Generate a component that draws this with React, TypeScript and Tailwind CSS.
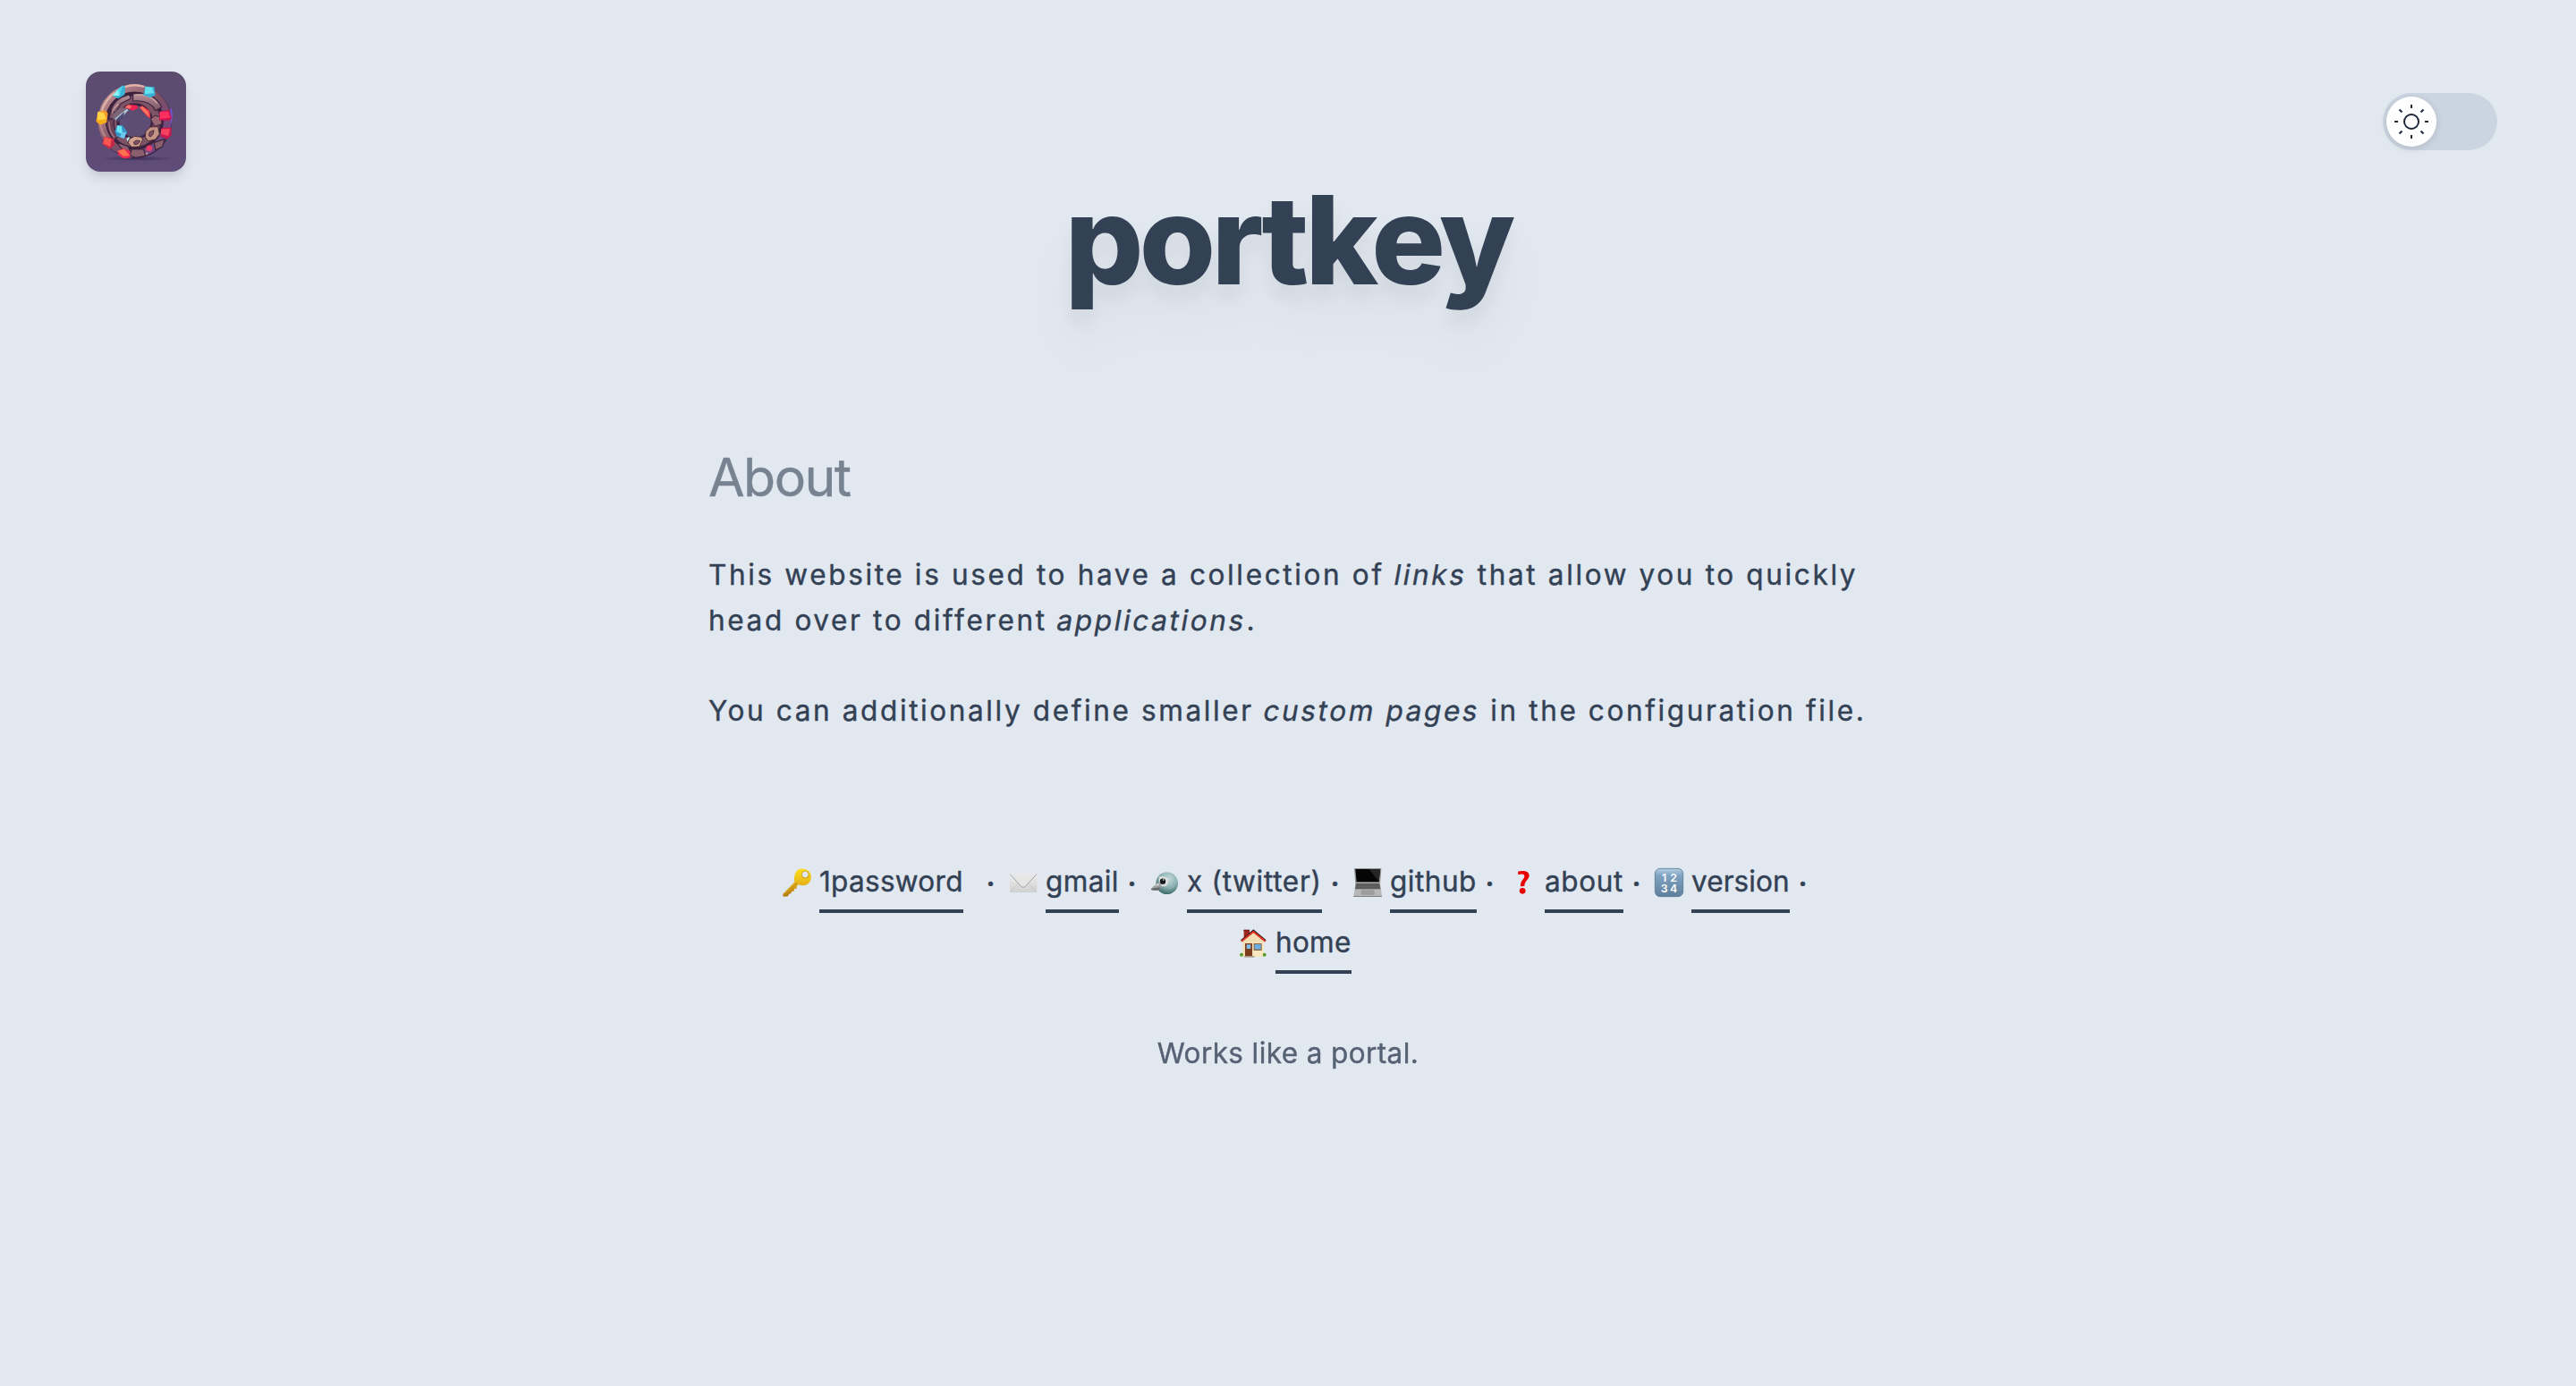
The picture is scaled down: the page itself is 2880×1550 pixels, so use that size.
import React from "react";

type IconProps = { children: React.ReactNode; box: string };

function Emoji({ children, box }: IconProps) {
  return (
    <svg viewBox={box} className="mr-[9px] mt-[5px] h-8 w-8 shrink-0 overflow-visible" aria-hidden="true">
      {children}
    </svg>
  );
}

function KeyIcon() {
  return (
    <Emoji box="45 63 96 96">
      <defs>
        <linearGradient id="key" x1="0" y1="0" x2="0" y2="1">
          <stop offset="0" stopColor="#ffdf1b" />
          <stop offset="0.55" stopColor="#e6b31a" />
          <stop offset="1" stopColor="#a9700c" />
        </linearGradient>
      </defs>
      <path
        fillRule="evenodd"
        fill="url(#key)"
        d="M99 67c12-5 27-1 36 9 8 10 8 24 0 34-7 9-18 12-28 10l-9-2-5 4-1 9-8 1-1 8-8 1-2 7-7 1-3 8-16 1-1-9 39-40c-3-15 1-36 14-42zM120 73a11 11 0 1 0 .1 0z"
      />
      <path d="M48 151l42-41 6 5-45 43z" fill="#c58f12" opacity=".6" />
      <path d="M50 148l38-38" stroke="#e7b82b" strokeWidth="3" />
      <circle cx="121" cy="84" r="12" fill="none" stroke="#b88a13" strokeWidth="2" />
    </Emoji>
  );
}

function MailIcon() {
  return (
    <Emoji box="804 63 96 96">
      <defs>
        <linearGradient id="mail" x1="0" y1="0" x2="0" y2="1">
          <stop offset="0" stopColor="#efefef" />
          <stop offset="1" stopColor="#d0d0d0" />
        </linearGradient>
      </defs>
      <rect x="807" y="81" width="91" height="63" rx="2" fill="url(#mail)" />
      <path d="M808 142l32-31M897 142l-32-31" stroke="#bdbdbd" strokeWidth="2" />
      <path d="M808 83l37 41q7 7 14 0l38-41" fill="#e6e6e6" stroke="#a4a4a4" strokeWidth="3" />
    </Emoji>
  );
}

function BirdIcon() {
  return (
    <Emoji box="48 63 96 96">
      <defs>
        <radialGradient id="bird" cx=".58" cy=".3" r=".7">
          <stop offset="0" stopColor="#c3d9dc" />
          <stop offset=".55" stopColor="#8fb4b5" />
          <stop offset="1" stopColor="#3f6c6c" />
        </radialGradient>
      </defs>
      <circle cx="104" cy="113" r="37" fill="url(#bird)" />
      <path d="M77 92c11-4 30-1 32 13 1 12-8 20-17 19-9 0-17-12-15-32z" fill="#e4e4e0" opacity=".85" />
      <path d="M51 132c7-9 17-19 27-22 8 7 8 18 2 25-9 3-21 3-29 1z" fill="#9c9fa0" />
      <path d="M51 132c10-2 20-3 30-6l-1 9c-10 3-21 2-29 0z" fill="#62676a" />
      <path d="M60 124c5-5 10-9 17-11l1 6z" fill="#cfd1d1" />
      <circle cx="90" cy="107" r="9.5" fill="#171a1b" />
      <circle cx="92" cy="102" r="2.5" fill="#fff" />
    </Emoji>
  );
}

function LaptopIcon() {
  return (
    <Emoji box="729 63 96 96">
      <path d="M734 63h87q2 0 2 3l-4 48h-83l-4-48q0-3 2-3z" fill="#8f8f8f" />
      <path d="M736 66h83l-4 43h-75z" fill="#050505" />
      <path d="M782 66h37l-4 42z" fill="#252525" />
      <path d="M737 112h82l6 44q0 3-3 3h-89q-4 0-3-3z" fill="#b7b7b7" />
      <path d="M738 114h79l3 19h-85z" fill="#565656" />
      <path d="M737 119h81M736 124h83M735 129h85" stroke="#8b8b8b" strokeWidth="1.2" strokeDasharray="4 1.5" />
      <path d="M756 136h43l2 16h-47z" fill="#9d9d9d" />
      <path d="M730 156h95v3h-95z" fill="#808080" />
    </Emoji>
  );
}

function QuestionIcon() {
  return (
    <Emoji box="108 63 96 96">
      <path
        d="M141 74c15-4 38-3 38 13 0 15-16 17-16 36l-13 1c-1-22 13-24 13-34 0-8-9-9-21-5z"
        fill="#e80000"
      />
      <circle cx="156.500" cy="139" r="10" fill="#e80000" />
    </Emoji>
  );
}

function NumbersIcon() {
  return (
    <Emoji box="600 63 96 96">
      <defs>
        <linearGradient id="nums" x1="0" y1="0" x2="0" y2="1">
          <stop offset="0" stopColor="#b4cfe2" />
          <stop offset=".25" stopColor="#7fa3c2" />
          <stop offset="1" stopColor="#5f7f9c" />
        </linearGradient>
      </defs>
      <rect x="601" y="64" width="94" height="94" rx="17" fill="url(#nums)" stroke="#587792" strokeWidth="2.500" />
      <g className="font-['Inter']" fill="#fff" fontSize="37" fontWeight="600" textAnchor="middle">
        <text x="632" y="107">1</text>
        <text x="663" y="107">2</text>
        <text x="632" y="143">3</text>
        <text x="663" y="143">4</text>
      </g>
    </Emoji>
  );
}

function HouseIcon() {
  return (
    <Emoji box="345 267 96 96">
      <path d="M362 270h19v24h-19z" fill="#a52620" />
      <path d="M361 269h20v5h-20z" fill="#7a1f1b" />
      <path d="M358 304l36-29 35 29v55h-71z" fill="#f3dfb4" />
      <path d="M395 312h34v47h-34z" fill="#f8e6c0" />
      <path d="M353 306l41-34 41 34" fill="none" stroke="#3a2020" strokeWidth="6" />
      <path d="M354 308l40-32 40 32" fill="none" stroke="#dd3327" strokeWidth="6" />
      <path d="M366 315h24v43h-24z" fill="#7a3b1e" />
      <path d="M371 319h14v14h-14z" fill="#7fc0ee" />
      <path d="M395 315h27v24h-27z" fill="#8d6040" />
      <path d="M398 318h21v17h-21z" fill="#6aaee2" />
      <path d="M364 357h33v5h-33z" fill="#a89b88" />
      <ellipse cx="354" cy="353" rx="6" ry="6" fill="#5c9a2c" />
      <ellipse cx="431" cy="353" rx="6" ry="6" fill="#5c9a2c" />
    </Emoji>
  );
}

function PortalLogo() {
  return (
    <svg
      viewBox="48 45 336 336"
      className="h-28 w-28 rounded-2xl shadow-[0_8px_14px_-2px_rgba(0,0,0,0.1),0_4px_8px_-4px_rgba(0,0,0,0.1)]"
    >
      <defs>
        <linearGradient id="bg" x1="0" y1="0" x2="0" y2="1">
          <stop offset="0" stopColor="#5b4c6e" />
          <stop offset="1" stopColor="#5f4c78" />
        </linearGradient>
        <linearGradient id="outer" x1="0" y1="0" x2="1" y2="1">
          <stop offset="0" stopColor="#c8989a" />
          <stop offset=".5" stopColor="#7d5063" />
          <stop offset="1" stopColor="#6a4590" />
        </linearGradient>
        <linearGradient id="stone" x1="0" y1="0" x2="0" y2="1">
          <stop offset="0" stopColor="#b8929a" />
          <stop offset="1" stopColor="#7a5264" />
        </linearGradient>
        <radialGradient id="ground">
          <stop offset="0" stopColor="#30234a" />
          <stop offset="1" stopColor="#30234a" stopOpacity="0" />
        </radialGradient>
      </defs>
      <rect x="48" y="45" width="336" height="336" fill="url(#bg)" />
      <ellipse cx="220" cy="337" rx="130" ry="8" fill="url(#ground)" opacity=".7" />
      <circle cx="213" cy="212" r="88" fill="none" stroke="#3c2340" strokeWidth="70" />
      <path d="M333 170a124 124 0 0 1-74 136" fill="none" stroke="#7a52d8" strokeWidth="6" />
      <circle cx="211" cy="210" r="110" fill="none" stroke="url(#outer)" strokeWidth="25" />
      <circle cx="212" cy="211" r="94" fill="none" stroke="#3a2038" strokeWidth="4" />
      <path d="M101 178c10-30 22-46 44-62M178 97c22-8 44-8 66-1" fill="none" stroke="#e2b2aa" strokeWidth="7" />
      <path d="M97 222c3 20 8 30 16 42M180 322c15 8 50 10 76-4" fill="none" stroke="#b5868c" strokeWidth="6" />
      <circle cx="212" cy="212" r="73" fill="none" stroke="#7d5365" strokeWidth="24" />
      <path d="M131 176c6-20 18-34 40-46l22-8 6 13-34 18-18 30z" fill="url(#stone)" stroke="#3c2340" strokeWidth="3.5" />
      <path d="M206 120c40-8 78 8 96 44l-20 12c-14-26-40-36-76-32z" fill="url(#stone)" stroke="#3c2340" strokeWidth="3.5" />
      <path d="M136 184c3-12 12-22 22-30M212 124c32-4 60 6 76 28" fill="none" stroke="#d1a3a1" strokeWidth="4" />
      <path d="M118 205c-2 28 6 50 24 70l15-12c-14-18-18-36-14-60z" fill="#6a4359" stroke="#3c2340" strokeWidth="3.5" />
      <path d="M126 214c0 22 6 40 18 52" fill="none" stroke="#aa7b84" strokeWidth="4" />
      <path d="M150 282l40 14 6 18-26-8zM202 305l40 1 6 22-32 6-20-8zM277 283l36-12-8 26-24 11z" fill="#8a606e" stroke="#3c2340" strokeWidth="3.5" />
      <path d="M265 205l14-12 22 4 2 24-24 8z" fill="#9a6672" stroke="#3c2340" strokeWidth="3" />
      <path d="M137 200c5-18 17-30 35-34l16 3-24 26-21 12z" fill="#7c6678" />
      <path d="M145 203l40-32 6 3-28 31-13 6z" fill="#b4cad9" />
      <path d="M148 207l30-28-6 24-20 10z" fill="#4f4b75" />
      <path d="M178 165l14-9 26 2 7 9-20 9z" fill="#ee234f" />
      <path d="M178 165l14-9 10 7-7 7z" fill="#ff6d67" />
      <path d="M228 166l9-6 25 16 3 25-10-4z" fill="#ee3548" />
      <path d="M229 165l8-3 20 18 3 18z" fill="#ff7560" />
      <path d="M138 126l33-35 9 5-2 27-22 13z" fill="#35b5d8" />
      <path d="M138 126l16-20 11-2-5 22z" fill="#8af3f5" />
      <path d="M154 106l17-14-9 33z" fill="#52d7eb" />
      <path d="M247 95l30 1 4 28-17 9-23-9z" fill="#39afd4" />
      <path d="M247 95l23 4 6 19-30 3z" fill="#66e1f0" />
      <path d="M88 180l24-5 10 10-4 31-22 8-14-11z" fill="#f29a28" />
      <path d="M88 180l20 3 9 22-31 4z" fill="#ffd447" />
      <path d="M84 209l28-4 5 10-20 8z" fill="#f4ae16" />
      <path d="M295 179l32-6 9 29-9 8-33-1z" fill="#ce1554" />
      <path d="M296 180l29 0 6 20-34 4z" fill="#fc315f" />
      <path d="M301 235l33-3 1 26-14 14-23-10z" fill="#c9184f" />
      <path d="M301 238l29-1-5 25-26-8z" fill="#f6415f" />
      <path d="M110 263l32 7 3 21-18 14-24-18z" fill="#c72749" />
      <path d="M111 264l23 8-4 25-24-10z" fill="#f85550" />
      <path d="M155 311l19-8 23 9-1 23-22 2-18-12z" fill="#e92853" />
      <path d="M155 311l22-6 18 22-22 2z" fill="#ff7250" />
      <path d="M153 226l17-1 16 22-9 23-24-7-8-18z" fill="#3796ca" />
      <path d="M153 226l14 2 5 28-21-9z" fill="#6ae6f6" />
      <path d="M170 249l14-1-8 22-14-6z" fill="#6ec8ec" />
      <path d="M184 270l9-7 3 11-9 5z" fill="#bdeaf3" />
      <path fillRule="evenodd" d="M193 272l18-10 24 3 4 9-12 23-26 1-11-14zM208 282l9-6 13 2-7 10-12 2z" fill="#d2a18e" stroke="#4b2d38" strokeWidth="3" />
      <path fillRule="evenodd" d="M249 245l16-14 25-1 5 25-14 18-24 5-10-13zM259 260l3-12 14-6-3 13-8 9z" fill="#c49284" stroke="#4b2d38" strokeWidth="3" />
      <path d="M251 296l12-5 9 10-6 12-16-3z" fill="#ef3b66" />
    </svg>
  );
}

function ThemeToggle() {
  return (
    <button className="mt-6 flex h-16 w-32 items-center rounded-full bg-[#cbd5e1] p-1" aria-label="Toggle theme">
      <span className="flex h-14 w-14 items-center justify-center rounded-full bg-white shadow-[0_2px_8px_rgba(0,0,0,0.12)]">
        <svg viewBox="-20 -20 40 40" className="h-10 w-10" fill="none" stroke="#1e293b" strokeWidth="2">
          <circle r="8" />
          <path d="M0-19v4M0 15v4M-19 0h4M15 0h4M-13.500-13.500l3 3M13.500-13.500l-3 3M-13.500 13.500l3-3M13.500 13.500l-3-3" />
        </svg>
      </span>
    </button>
  );
}

type PortalProps = { icon: React.ReactNode; className: string; children: string };

function Portal({ icon, className, children }: PortalProps) {
  return (
    <div className="flex items-start">
      {icon}
      <a href="#" className={`block h-[55px] whitespace-nowrap border-b-4 border-[#334155] leading-10 ${className}`}>
        {children}
      </a>
    </div>
  );
}

function Dot({ className = "" }: { className?: string }) {
  return <span className={`mr-[6px] w-[29px] pt-[2px] text-center font-semibold leading-10 ${className}`}>·</span>;
}

function Em({ children }: { children: string }) {
  return <em className="inline-block -skew-x-[10deg] not-italic">{children}</em>;
}

export default function App() {
  return (
    <div className="min-h-[1550px] bg-[#e2e8f0] font-['Inter',sans-serif] text-[31.5px] text-[#334155]">
      <header className="flex items-start justify-between pl-24 pr-[88px] pt-20">
        <PortalLogo />
        <ThemeToggle />
      </header>
      <h1 className="mt-[4px] text-center text-[138px] font-extrabold leading-[144px] tracking-[-4.7px] [filter:drop-shadow(0_16px_10px_rgba(0,0,0,0.06))_drop-shadow(0_40px_26px_rgba(0,0,0,0.03))]">
        portkey
      </h1>
      <main className="mx-auto mt-[158px] w-[1296px] [-webkit-text-stroke:0.4px_currentColor]">
        <h2 className="text-[59px] leading-[72px] tracking-[-1.600px] opacity-60">About</h2>
        <p className="mt-[47px] whitespace-nowrap leading-[51.2px] tracking-[2.65px]">
          This website is used to have a collection of <Em>links</Em> that allow you to quickly
          <br />
          head over to different <Em>applications</Em>.
        </p>
        <p className="mt-[50px] whitespace-nowrap leading-[51.2px] tracking-[2.62px]">
          You can additionally define smaller <Em>custom pages</Em> in the configuration file.
        </p>
        <nav className="mt-[145px]">
          <div className="flex items-start justify-center pl-[31px]">
            <Portal icon={<KeyIcon />} className="w-[161px] tracking-[0.3px]">1password</Portal>
            <Dot className="ml-[16px]" />
            <Portal icon={<MailIcon />} className="w-[82px] tracking-[0.4px]">gmail</Portal>
            <Dot />
            <Portal icon={<BirdIcon />} className="w-[151px] tracking-[0.7px]">x (twitter)</Portal>
            <Dot />
            <Portal icon={<LaptopIcon />} className="w-[97px] tracking-[0.5px]">github</Portal>
            <Dot />
            <Portal icon={<QuestionIcon />} className="w-[88px] tracking-[0.6px]">about</Portal>
            <Dot />
            <Portal icon={<NumbersIcon />} className="w-[110px] tracking-[0.1px]">version</Portal>
            <Dot />
          </div>
          <div className="mt-[13px] flex items-start justify-center pl-4">
            <Portal icon={<HouseIcon />} className="w-[85px] tracking-[0.3px]">home</Portal>
          </div>
        </nav>
        <p className="mt-[69px] text-center leading-10 tracking-[0.4px] opacity-80">Works like a portal.</p>
      </main>
    </div>
  );
}
